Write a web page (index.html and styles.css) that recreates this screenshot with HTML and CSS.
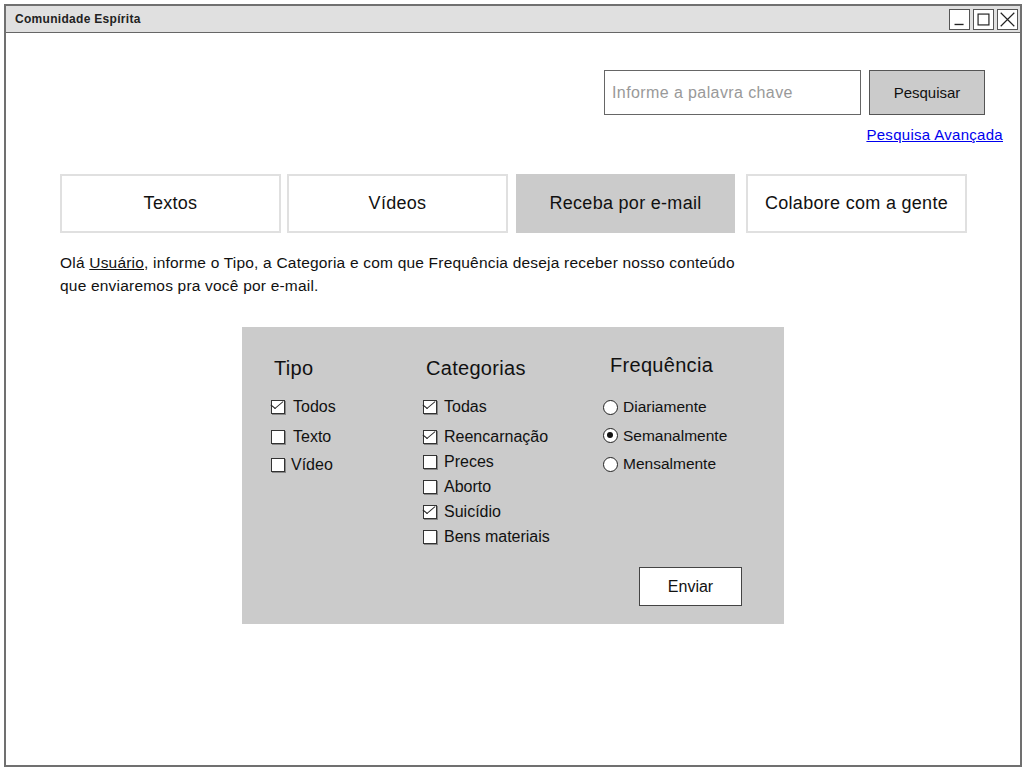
FILE: index.html
```html
<!DOCTYPE html>
<html lang="pt">
<head>
<meta charset="utf-8">
<title>Comunidade Espírita</title>
<link rel="stylesheet" href="styles.css">
</head>
<body>
<div class="window">
  <div class="titlebar">
    <span class="title">Comunidade Espírita</span>
    <div class="winbtns">
      <span class="wb"><svg width="21" height="21" viewBox="0 0 21 21"><path d="M5 16 H15" stroke="#222" stroke-width="1.5"/></svg></span>
      <span class="wb"><svg width="21" height="21" viewBox="0 0 21 21"><rect x="4.5" y="4.5" width="12" height="12" fill="none" stroke="#222" stroke-width="1.3"/></svg></span>
      <span class="wb"><svg width="21" height="21" viewBox="0 0 21 21"><path d="M3 3 L18 18 M18 3 L3 18" stroke="#222" stroke-width="1.3"/></svg></span>
    </div>
  </div>
  <div class="content">
    <div class="search">
      <div class="search-input">Informe a palavra chave</div>
      <div class="btn-search">Pesquisar</div>
    </div>
    <div class="adv"><a href="#">Pesquisa Avançada</a></div>
    <div class="tabs">
      <div class="tab">Textos</div>
      <div class="tab">Vídeos</div>
      <div class="tab active">Receba por e-mail</div>
      <div class="tab">Colabore com a gente</div>
    </div>
    <p class="intro">Olá <u>Usuário</u>, informe o Tipo, a Categoria e com que Frequência deseja receber nosso conteúdo<br>que enviaremos pra você por e-mail.</p>
    <div class="panel">
      <div class="cols">
        <div class="col tipo">
          <div class="heading">Tipo</div>
          <div class="list">
            <div class="opt"><span class="cb on"></span><span class="lbl">Todos</span></div>
            <div class="opt"><span class="cb"></span><span class="lbl">Texto</span></div>
            <div class="opt"><span class="cb"></span><span class="lbl tight">Vídeo</span></div>
          </div>
        </div>
        <div class="col cat">
          <div class="heading">Categorias</div>
          <div class="list">
            <div class="opt"><span class="cb on"></span><span class="lbl">Todas</span></div>
            <div class="opt"><span class="cb on"></span><span class="lbl">Reencarnação</span></div>
            <div class="opt"><span class="cb"></span><span class="lbl">Preces</span></div>
            <div class="opt"><span class="cb"></span><span class="lbl">Aborto</span></div>
            <div class="opt"><span class="cb on"></span><span class="lbl">Suicídio</span></div>
            <div class="opt"><span class="cb"></span><span class="lbl">Bens materiais</span></div>
          </div>
        </div>
        <div class="col freq">
          <div class="heading">Frequência</div>
          <div class="list">
            <div class="opt"><span class="rd"></span><span class="lbl">Diariamente</span></div>
            <div class="opt"><span class="rd on"></span><span class="lbl">Semanalmente</span></div>
            <div class="opt"><span class="rd"></span><span class="lbl">Mensalmente</span></div>
          </div>
        </div>
      </div>
      <div class="footer">
        <div class="btn-send">Enviar</div>
      </div>
    </div>
  </div>
</div>
</body>
</html>
```

FILE: styles.css
```css
* { box-sizing: border-box; }
html, body { margin: 0; padding: 0; background: #fff; }
body {
  font-family: "Liberation Sans", Arial, sans-serif;
  color: #111;
}
.window {
  margin: 4px 0 0 4px;
  width: 1018px;
  height: 763px;
  border: 2px solid #707070;
  display: flex;
  flex-direction: column;
}
.titlebar {
  height: 27px;
  background: #e0e0e0;
  border-bottom: 1px solid #666;
  display: flex;
  align-items: center;
  justify-content: space-between;
  padding-left: 9px;
  padding-right: 2px;
}
.title {
  font-size: 12px;
  letter-spacing: 0.3px;
  font-weight: bold;
  color: #222;
}
.winbtns { display: flex; gap: 3px; }
.wb {
  width: 21px;
  height: 21px;
  border: 1px solid #555;
  background: #fff;
  display: flex;
  align-items: center;
  justify-content: center;
}
.wb svg { display: block; width: 19px; height: 19px; }
.content {
  flex: 1;
  display: flex;
  flex-direction: column;
}
.search {
  margin-top: 37px;
  display: flex;
  justify-content: flex-end;
  gap: 8px;
  padding-right: 35px;
}
.search-input {
  width: 257px;
  height: 45px;
  border: 1.5px solid #666;
  background: #fff;
  color: #999;
  font-size: 16px;
  letter-spacing: 0.4px;
  display: flex;
  align-items: center;
  padding-left: 7px;
}
.btn-search {
  width: 116px;
  height: 45px;
  border: 1.5px solid #555;
  background: #cbcbcb;
  display: flex;
  align-items: center;
  justify-content: center;
  font-size: 15px;
}
.adv {
  margin-top: 10px;
  text-align: right;
  padding-right: 17px;
  line-height: 20px;
  font-size: 15px;
}
.adv a { color: #0000ee; text-decoration: underline; letter-spacing: 0.3px; }
.tabs {
  margin: 29px 0 0 54px;
  display: flex;
}
.tab {
  width: 221px;
  height: 59px;
  border: 2px solid #e0e0e0;
  display: flex;
  align-items: center;
  justify-content: center;
  font-size: 18px;
  letter-spacing: 0.3px;
  flex: none;
}
.tab:nth-child(2) { margin-left: 6px; }
.tab:nth-child(3) { margin-left: 8px; width: 219px; }
.tab:nth-child(4) { margin-left: 11px; }
.tab.active { background: #cbcbcb; border-color: #cbcbcb; }
.intro {
  margin: 18px 0 0 54px;
  font-size: 15.5px;
  line-height: 23px;
  letter-spacing: 0.2px;
}
.panel {
  margin: 30px auto 0;
  width: 542px;
  height: 297px;
  background: #cbcbcb;
  display: flex;
  flex-direction: column;
}
.cols { display: flex; padding-top: 29px; }
.col.tipo { width: 181px; padding-left: 29px; }
.col.cat { width: 180px; }
.col.freq { flex: 1; }
.heading {
  font-size: 20px;
  line-height: 24px;
  height: 24px;
  padding-left: 3px;
  letter-spacing: 0.3px;
}
.freq .heading { margin-top: -3px; margin-bottom: 3px; padding-left: 7px; }
.list { margin-top: 14px; }
.opt {
  height: 25px;
  display: flex;
  align-items: center;
  font-size: 16px;
}
.opt:first-child { margin-bottom: 5px; }
.tipo .opt:nth-child(3) { margin-top: 3px; }
.freq .opt { height: 28.5px; margin: 0; }
.freq .list { margin-top: 16px; }
.cb {
  position: relative;
  width: 14px;
  height: 14px;
  border: 1.5px solid #333;
  background: #fff;
  box-shadow: 1px 1px 0 #888;
  flex: none;
}
.cb.on::after {
  content: "";
  position: absolute;
  left: 2px;
  top: -3px;
  width: 5px;
  height: 10px;
  border-right: 1.5px solid #222;
  border-bottom: 1.5px solid #222;
  transform: rotate(40deg) skewX(-10deg);
}
.tipo .lbl { margin-left: 8px; }
.tipo .lbl.tight { margin-left: 6px; }
.cat .lbl { margin-left: 7px; }
.rd {
  position: relative;
  width: 15px;
  height: 15px;
  border-radius: 50%;
  border: 1.5px solid #222;
  background: #fff;
  flex: none;
}
.rd.on::after {
  content: "";
  position: absolute;
  left: 3px;
  top: 3px;
  width: 6px;
  height: 6px;
  border-radius: 50%;
  background: #111;
}
.freq .lbl { margin-left: 5px; font-size: 15.5px; }
.footer {
  margin-top: auto;
  display: flex;
  justify-content: flex-end;
  padding: 0 42px 18px 0;
}
.btn-send {
  width: 103px;
  height: 39px;
  background: #fff;
  border: 1.5px solid #444;
  display: flex;
  align-items: center;
  justify-content: center;
  font-size: 16px;
}
```
